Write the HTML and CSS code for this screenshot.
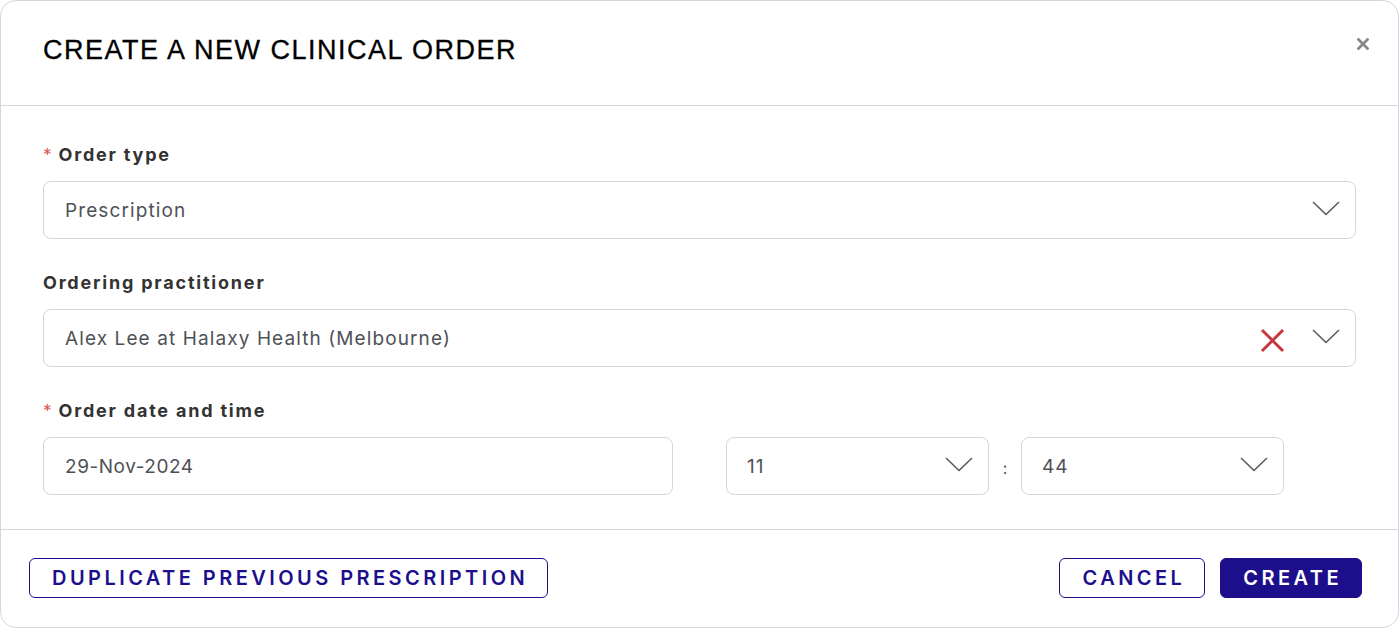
FILE: index.html
```html
<!DOCTYPE html>
<html lang="en">
<head>
<meta charset="utf-8">
<title>Create a new clinical order</title>
<link rel="stylesheet" href="styles.css">
</head>
<body>
<div class="dialog">
  <header class="dlg-header">
    <h1 class="dlg-title">CREATE A NEW CLINICAL ORDER</h1>
    <button class="dlg-close" aria-label="Close">
      <svg width="12" height="12" viewBox="0 0 12 12"><path d="M1.5 1.5L10.5 10.5M10.5 1.5L1.5 10.5" stroke="#878787" stroke-width="2.7" stroke-linecap="square"/></svg>
    </button>
  </header>
  <main class="dlg-body">
    <div class="field">
      <label class="field-label"><span class="req">*</span>Order type</label>
      <div class="control">
        <span class="control-value">Prescription</span>
        <span class="chevron"><svg width="28" height="15" viewBox="0 0 28 15"><path d="M1 1L14 13.5L27 1" fill="none" stroke="#555a60" stroke-width="1.6"/></svg></span>
      </div>
    </div>
    <div class="field">
      <label class="field-label">Ordering practitioner</label>
      <div class="control">
        <span class="control-value">Alex Lee at Halaxy Health (Melbourne)</span>
        <span class="clear"><svg width="25" height="25" viewBox="0 0 25 25"><path d="M2 2L23 23M23 2L2 23" stroke="#c8353c" stroke-width="3"/></svg></span>
        <span class="chevron"><svg width="28" height="15" viewBox="0 0 28 15"><path d="M1 1L14 13.5L27 1" fill="none" stroke="#555a60" stroke-width="1.6"/></svg></span>
      </div>
    </div>
    <div class="field">
      <label class="field-label"><span class="req">*</span>Order date and time</label>
      <div class="datetime">
        <div class="control date">
          <span class="control-value">29-Nov-2024</span>
        </div>
        <div class="control time">
          <span class="control-value">11</span>
          <span class="chevron"><svg width="28" height="15" viewBox="0 0 28 15"><path d="M1 1L14 13.5L27 1" fill="none" stroke="#555a60" stroke-width="1.6"/></svg></span>
        </div>
        <span class="colon">:</span>
        <div class="control time">
          <span class="control-value">44</span>
          <span class="chevron"><svg width="28" height="15" viewBox="0 0 28 15"><path d="M1 1L14 13.5L27 1" fill="none" stroke="#555a60" stroke-width="1.6"/></svg></span>
        </div>
      </div>
    </div>
  </main>
  <footer class="dlg-footer">
    <button class="btn btn-outline">DUPLICATE PREVIOUS PRESCRIPTION</button>
    <div class="footer-right">
      <button class="btn btn-outline">CANCEL</button>
      <button class="btn btn-primary">CREATE</button>
    </div>
  </footer>
</div>
</body>
</html>
```

FILE: styles.css
```css
* { box-sizing: border-box; }
html, body { margin: 0; padding: 0; background: #fff; }
body { font-family: Inter, "Noto Sans", sans-serif; color: #333; }

.dialog {
  width: 1399px;
  height: 628px;
  border: 1px solid #d3d6dc;
  border-radius: 16px;
  background: #fff;
  display: flex;
  flex-direction: column;
}

.dlg-header {
  height: 105px;
  border-bottom: 1px solid #d3d6dc;
  display: flex;
  align-items: center;
  padding: 0 26px 6px 42px;
  position: relative;
}
.dlg-title {
  margin: 0;
  font-family: "Liberation Sans", Arial, sans-serif;
  font-weight: 400;
  font-size: 27px;
  color: #000;
  letter-spacing: 1.5px;
  -webkit-text-stroke: 0.3px #000;
}
.dlg-close {
  position: absolute;
  top: 37px;
  right: 29px;
  border: 0;
  background: none;
  padding: 0;
  width: 12px;
  height: 12px;
  display: flex;
}

.dlg-body {
  padding: 37px 42px 0 42px;
  height: 424px;
  border-bottom: 1px solid #d3d6dc;
  display: flex;
  flex-direction: column;
  gap: 32px;
}
.field { display: flex; flex-direction: column; gap: 14px; }
.field-label {
  font-size: 18px;
  font-weight: 700;
  line-height: 24px;
  color: #333;
  letter-spacing: 1.8px;
}
.req { color: #d9534f; font-weight: 400; margin-right: 7px; font-size: 17px; letter-spacing: 0; }

.control {
  height: 58px;
  border: 1px solid #d3d6dc;
  border-radius: 8px;
  display: flex;
  align-items: center;
  padding: 0 15px 0 21px;
}
.control-value {
  flex: 1;
  font-size: 19px;
  color: #4e5156;
  letter-spacing: 1.1px;
}
.date .control-value { letter-spacing: 0.55px; }
.chevron { display: flex; width: 28px; height: 15px; margin-top: -3px; }
.clear { display: flex; margin-right: 27px; margin-top: 4px; }

.datetime { display: flex; align-items: center; }
.control.date { width: 630px; margin-right: 53px; }
.control.time { width: 263px; padding-left: 20px; padding-right: 15px; }
.colon { width: 32px; text-align: center; font-size: 16px; color: #555; padding-top: 4px; }

.dlg-footer {
  flex: 1;
  display: flex;
  align-items: center;
  justify-content: space-between;
  padding: 0 36px 1px 28px;
}
.footer-right { display: flex; gap: 15px; }
.btn {
  height: 40px;
  border-radius: 6px;
  font-family: Inter, "Noto Sans", sans-serif;
  font-size: 20px;
  font-weight: 600;
  letter-spacing: 3.45px;
  padding: 0 19px 0 22px;
  cursor: pointer;
}
.btn-outline {
  border: 1px solid #1d0f8c;
  background: #fff;
  color: #1d0f8c;
}
.btn-primary {
  border: 1px solid #1d0f8c;
  background: #1d0f8c;
  color: #fff;
}
```
